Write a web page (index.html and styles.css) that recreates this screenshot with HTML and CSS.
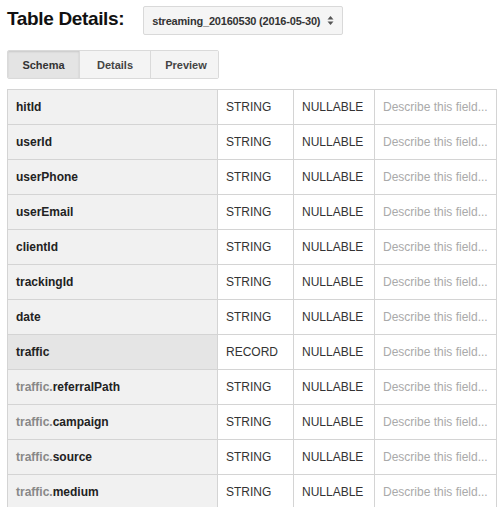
FILE: index.html
```html
<!DOCTYPE html>
<html>
<head>
<meta charset="utf-8">
<link rel="stylesheet" href="styles.css">
</head>
<body>
<div class="page">
  <div class="header">
    <h1 class="title">Table Details:</h1>
    <div class="select">
      <span class="select-text">streaming_20160530 (2016-05-30)</span>
      <svg class="select-arrows" width="7" height="11" viewBox="0 0 7 11"><path d="M0.5 4.5 L3.5 1 L6.5 4.5 Z" fill="#555"/><path d="M0.5 6.5 L3.5 10 L6.5 6.5 Z" fill="#555"/></svg>
    </div>
  </div>
  <div class="tabs">
    <div class="tab active">Schema</div>
    <div class="tab">Details</div>
    <div class="tab">Preview</div>
  </div>
  <table class="schema">
    <colgroup><col class="c-name"><col class="c-type"><col class="c-mode"><col class="c-desc"></colgroup>
    <tr><td class="name">hitId</td><td>STRING</td><td>NULLABLE</td><td class="desc">Describe this field...</td></tr>
    <tr><td class="name">userId</td><td>STRING</td><td>NULLABLE</td><td class="desc">Describe this field...</td></tr>
    <tr><td class="name">userPhone</td><td>STRING</td><td>NULLABLE</td><td class="desc">Describe this field...</td></tr>
    <tr><td class="name">userEmail</td><td>STRING</td><td>NULLABLE</td><td class="desc">Describe this field...</td></tr>
    <tr><td class="name">clientId</td><td>STRING</td><td>NULLABLE</td><td class="desc">Describe this field...</td></tr>
    <tr><td class="name">trackingId</td><td>STRING</td><td>NULLABLE</td><td class="desc">Describe this field...</td></tr>
    <tr><td class="name">date</td><td>STRING</td><td>NULLABLE</td><td class="desc">Describe this field...</td></tr>
    <tr class="record"><td class="name">traffic</td><td>RECORD</td><td>NULLABLE</td><td class="desc">Describe this field...</td></tr>
    <tr><td class="name"><span class="prefix">traffic.</span>referralPath</td><td>STRING</td><td>NULLABLE</td><td class="desc">Describe this field...</td></tr>
    <tr><td class="name"><span class="prefix">traffic.</span>campaign</td><td>STRING</td><td>NULLABLE</td><td class="desc">Describe this field...</td></tr>
    <tr><td class="name"><span class="prefix">traffic.</span>source</td><td>STRING</td><td>NULLABLE</td><td class="desc">Describe this field...</td></tr>
    <tr><td class="name"><span class="prefix">traffic.</span>medium</td><td>STRING</td><td>NULLABLE</td><td class="desc">Describe this field...</td></tr>
  </table>
</div>
</body>
</html>
```
FILE: styles.css
```css
html, body {
  margin: 0;
  padding: 0;
  background: #fff;
  font-family: "Liberation Sans", Arial, sans-serif;
  color: #222;
}
.page {
  padding: 6px 0 0 7px;
}
.header {
  display: flex;
  align-items: flex-start;
  gap: 19px;
  height: 44px;
}
.title {
  margin: 0;
  font-size: 19px;
  letter-spacing: -0.35px;
  font-weight: bold;
  line-height: 20px;
  padding-top: 3px;
  color: #111;
}
.select {
  box-sizing: border-box;
  height: 29px;
  width: 200px;
  border: 1px solid #d9d9d9;
  border-radius: 2px;
  background: #f5f5f5;
  display: flex;
  align-items: center;
  padding: 0 8px 0 8px;
  justify-content: space-between;
}
.select-text {
  font-size: 11px;
  letter-spacing: -0.2px;
  font-weight: bold;
  color: #333;
}
.select-arrows { display: block; }
.tabs {
  display: flex;
  width: 212px;
  height: 29px;
  box-sizing: border-box;
  border: 1px solid #dadada;
  border-radius: 2px;
  overflow: hidden;
}
.tab {
  flex: 0 0 auto;
  width: 70px;
  display: flex;
  align-items: center;
  justify-content: center;
  font-size: 11px;
  font-weight: bold;
  color: #444;
  background: #f4f4f4;
  border-left: 1px solid #dadada;
}
.tab:first-child { border-left: none; width: 71px; }
.tab.active {
  background: #e4e4e4;
  box-shadow: inset 0 1px 2px rgba(0,0,0,0.12);
  color: #333;
}
.schema {
  margin-top: 10px;
  border-collapse: collapse;
  table-layout: fixed;
  width: 489px;
  font-size: 12px;
}
.c-name { width: 210px; }
.c-type { width: 76px; }
.c-mode { width: 81px; }
.c-desc { width: 122px; }
.schema td {
  border: 1px solid #d4d4d4;
  height: 35px;
  padding: 0 0 0 8px;
  color: #333;
  white-space: nowrap;
  overflow: hidden;
  box-sizing: border-box;
}
.schema td.name {
  background: #f1f1f1;
  font-weight: bold;
  color: #222;
}
.schema tr.record td.name { background: #e5e5e5; }
.schema td.desc { color: #aaa; }
.prefix { color: #888; }
```
